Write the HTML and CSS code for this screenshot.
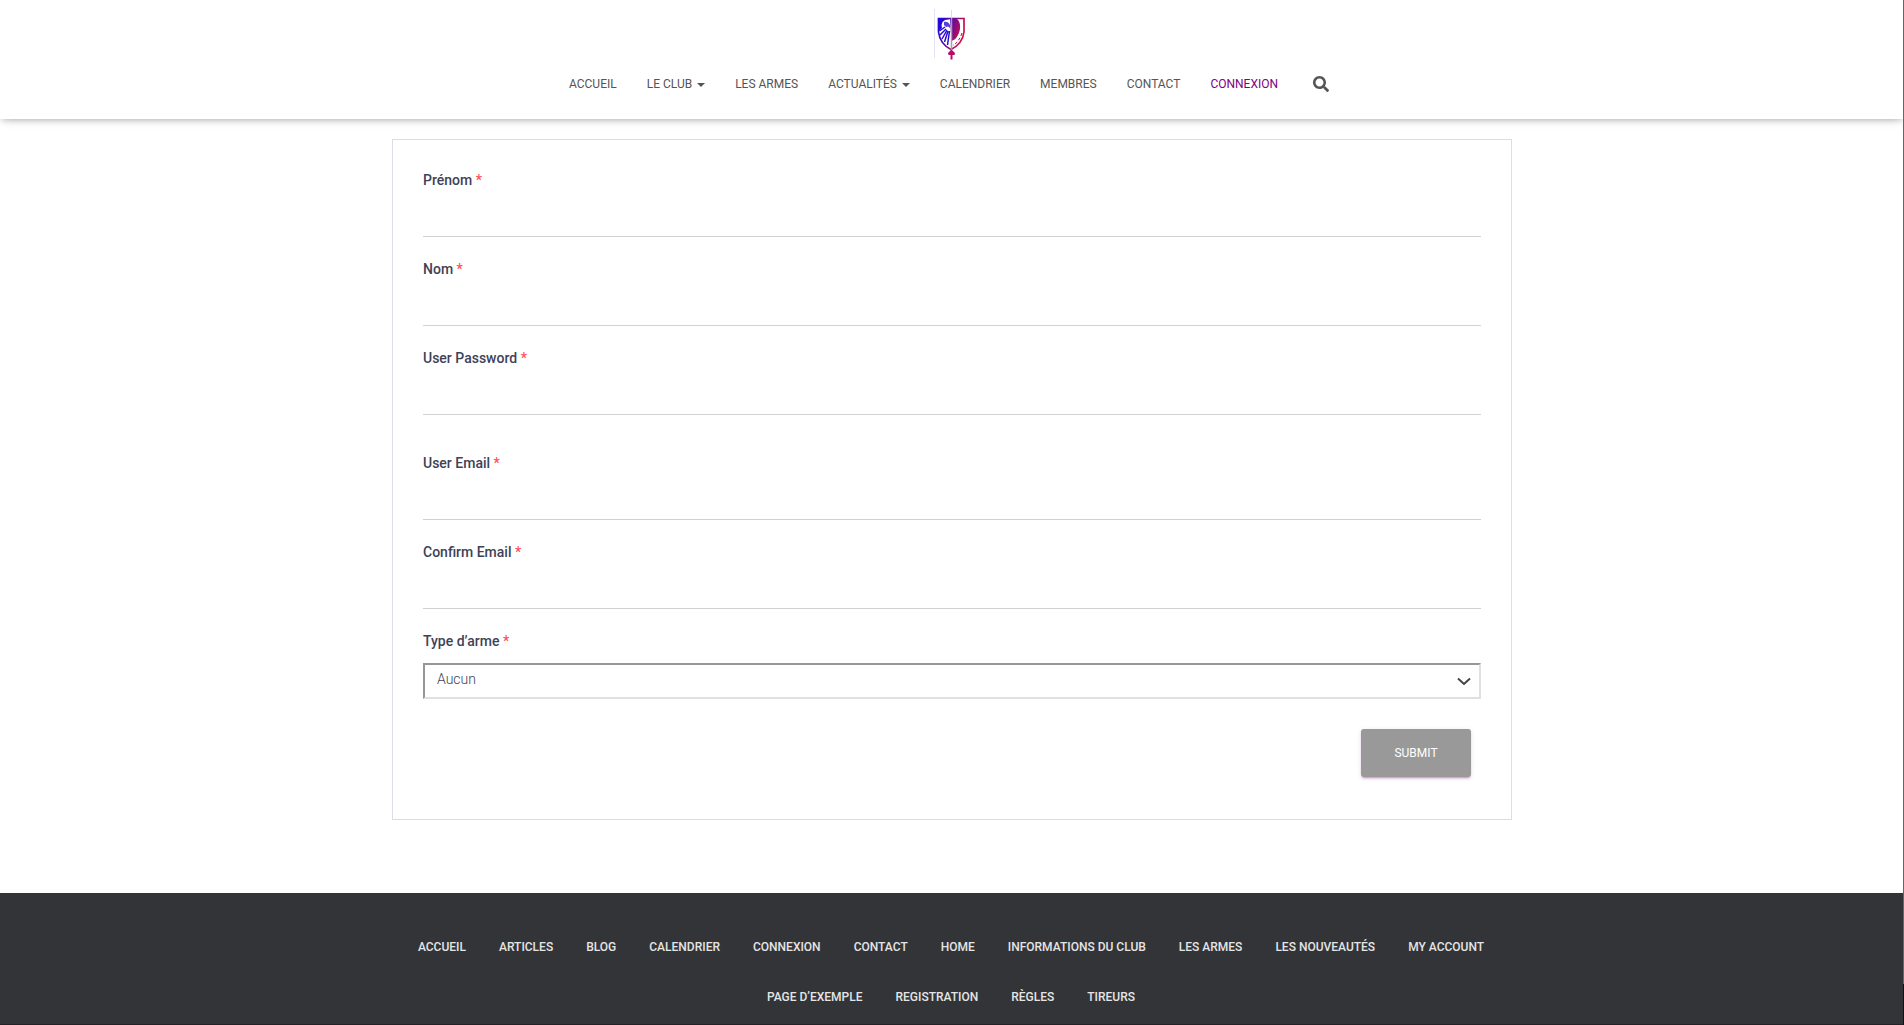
FILE: index.html
```html
<!DOCTYPE html>
<html lang="fr">
<head>
<meta charset="utf-8">
<title>Registration</title>
<link rel="stylesheet" href="styles.css">
</head>
<body>
<header class="header">
  <a class="logo" href="#" aria-label="Accueil">
    <svg width="36" height="56" viewBox="0 0 36 56">
      <defs>
        <linearGradient id="crest" gradientUnits="userSpaceOnUse" x1="5" y1="18" x2="30" y2="26">
          <stop offset="0" stop-color="#1c08dc"/>
          <stop offset="0.5" stop-color="#5f0aa0"/>
          <stop offset="1" stop-color="#d01045"/>
        </linearGradient>
      </defs>
      <path d="M1.500 5V54" stroke="#e6e2f5"/>
      <path d="M5.500 14.500H31V28C30 36 25 42 18 45.500C11 42 6.500 36 5.500 28Z" fill="#fff" stroke="url(#crest)" stroke-width="1.700"/>
      <path d="M17 15H24C28 18 28 26 25 31C23 35 21 36 18.500 37Z" fill="url(#crest)"/>
      <path d="M6 15H17L12 16L9.500 18L8.500 21L9 24L6 27Z" fill="#2208d8"/>
      <path d="M11 18C13 17 16 18 17 21L17 24L15 22.500L13 23L11 21Z" fill="#5a3fd8"/>
      <path d="M12 23L6.500 27M13 25L7 31M14 26L9 35M15 27L11.500 38M16.500 27L14.500 41" fill="none" stroke="#2a0cd0" stroke-width="1.500"/>
      <path d="M29 29C27 35 24 39 20 41.500" fill="none" stroke="#b01060" stroke-width="1" stroke-dasharray="3 2"/>
      <path d="M18.500 6V14" stroke="#dcd8ea"/>
      <path d="M18.500 14V46" stroke="#a59bb5" stroke-width="1.500"/>
      <path d="M18.500 45.500L22 49L21.500 51H19.500V55.500H17.500V51H15.500L15 49Z" fill="#b80c68"/>
    </svg>
  </a>
  <nav class="nav" aria-label="Menu principal">
    <a href="#">ACCUEIL</a>
    <a href="#">LE CLUB <span class="caret"></span></a>
    <a href="#">LES ARMES</a>
    <a href="#">ACTUALITÉS <span class="caret"></span></a>
    <a href="#">CALENDRIER</a>
    <a href="#">MEMBRES</a>
    <a href="#">CONTACT</a>
    <a class="current" href="#">CONNEXION</a>
    <button class="search" type="button" aria-label="Rechercher">
      <svg width="16" height="16" viewBox="0 0 512 512"><path fill="#555" d="M505 442.700 405.300 343c-4.500-4.500-10.600-7-17-7H372c27.600-35.300 44-79.700 44-128C416 93.100 322.900 0 208 0S0 93.100 0 208s93.100 208 208 208c48.300 0 92.700-16.400 128-44v16.300c0 6.400 2.500 12.500 7 17l99.700 99.700c9.400 9.400 24.600 9.400 33.900 0l28.300-28.300c9.400-9.400 9.400-24.600.1-34zM208 336c-70.700 0-128-57.200-128-128 0-70.700 57.200-128 128-128 70.700 0 128 57.200 128 128 0 70.700-57.200 128-128 128z"/></svg>
    </button>
  </nav>
</header>
<main class="main">
  <form class="form">
    <div class="field"><label for="first">Prénom <span class="req">*</span></label><input id="first" type="text"></div>
    <div class="field"><label for="last">Nom <span class="req">*</span></label><input id="last" type="text"></div>
    <div class="field field-password"><label for="pass">User Password <span class="req">*</span></label><input id="pass" type="password"></div>
    <div class="field"><label for="email">User Email <span class="req">*</span></label><input id="email" type="email"></div>
    <div class="field"><label for="email2">Confirm Email <span class="req">*</span></label><input id="email2" type="email"></div>
    <div class="field"><label for="arme">Type d’arme <span class="req">*</span></label>
      <div class="select">
        <select id="arme"><option>Aucun</option></select>
        <svg class="chevron" width="14" height="9" viewBox="0 0 14 9"><path d="M1 1.500L7 7L13 1.500" fill="none" stroke="#444" stroke-width="2"/></svg>
      </div>
    </div>
    <button class="submit" type="button">SUBMIT</button>
  </form>
</main>
<footer class="footer">
  <nav class="links" aria-label="Pied de page">
    <a href="#">ACCUEIL</a>
    <a href="#">ARTICLES</a>
    <a href="#">BLOG</a>
    <a href="#">CALENDRIER</a>
    <a href="#">CONNEXION</a>
    <a href="#">CONTACT</a>
    <a href="#">HOME</a>
    <a href="#">INFORMATIONS DU CLUB</a>
    <a href="#">LES ARMES</a>
    <a href="#">LES NOUVEAUTÉS</a>
    <a href="#">MY ACCOUNT</a>
    <a href="#">PAGE D’EXEMPLE</a>
    <a href="#">REGISTRATION</a>
    <a href="#">RÈGLES</a>
    <a href="#">TIREURS</a>
  </nav>
</footer>
<div class="edge"></div>
</body>
</html>
```
FILE: styles.css
```css
* { box-sizing: border-box; }
body {
  margin: 0;
  min-height: 100vh;
  display: flex;
  flex-direction: column;
  background: #fff;
  font-family: Roboto, "Liberation Sans", sans-serif;
  font-size: 14px;
}
a { color: inherit; text-decoration: none; }
.header {
  display: flex;
  flex-direction: column;
  align-items: center;
  padding: 4px 0 18px;
  box-shadow: 0 1px 10px -6px rgba(0,0,0,.42), 0 1px 10px 0 rgba(0,0,0,.12), 0 4px 5px -2px rgba(0,0,0,.1);
}
.logo { display: flex; padding-right: 2px; }
.nav {
  display: flex;
  align-items: center;
  gap: 30px;
  height: 34px;
  margin-top: 7px;
  padding-right: 6px;
  color: #555;
  font-size: 12px;
  line-height: 20px;
}
.nav .current { color: #800080; }
.caret {
  display: inline-block;
  margin-left: 2px;
  border: 4px solid transparent;
  border-top-color: #555;
  border-bottom: 0;
  vertical-align: middle;
}
.search {
  display: flex;
  margin-left: 5px;
  padding: 0;
  border: 0;
  background: none;
}
.main { padding: 20px 20px 73px; }
.form {
  display: flex;
  flex-direction: column;
  max-width: 1120px;
  margin: 0 auto;
  padding: 30px 30px 42px;
  border: 1px solid #dddde8;
}
.field { display: flex; flex-direction: column; margin-bottom: 22px; }
.field-password { margin-bottom: 38px; }
.field label { color: #3f4257; font-weight: 500; line-height: 21px; }
.req { color: #ff4f55; }
.field input {
  height: 46px;
  border: 0;
  border-bottom: 1px solid #d2d2d2;
  background: none;
  font: inherit;
  outline: 0;
}
.select { position: relative; margin-top: 11px; }
.select select {
  display: block;
  width: 100%;
  height: 36px;
  padding: 0 12px 4px;
  appearance: none;
  border: 2px solid #969696;
  border-right-color: #e0e0e0;
  border-bottom-color: #e0e0e0;
  border-radius: 0;
  background: #fff;
  color: #3f4257;
  font: 300 14px Roboto, "Liberation Sans", sans-serif;
}
.chevron { position: absolute; right: 10px; top: 14px; pointer-events: none; }
.submit {
  align-self: flex-end;
  width: 110px;
  height: 48px;
  margin: 8px 10px 0 0;
  border: 0;
  border-radius: 3px;
  background: #999;
  box-shadow: 0 2px 2px 0 rgba(128,0,128,.14), 0 3px 1px -2px rgba(128,0,128,.2), 0 1px 5px 0 rgba(128,0,128,.12);
  color: #fff;
  font: 400 12px Roboto, "Liberation Sans", sans-serif;
}
.footer {
  flex: 1;
  padding: 29px 20px 2px;
  background: #323437;
  border-bottom: 1px solid #232227;
}
.links {
  display: flex;
  flex-wrap: wrap;
  justify-content: center;
  column-gap: 33px;
  max-width: 1110px;
  margin: 0 auto;
  padding-right: 2px;
  color: #e5e5e5;
  font-size: 12px;
  font-weight: 500;
}
.links a { line-height: 20px; padding: 15px 0; }
.edge {
  position: absolute;
  top: 0;
  right: 0;
  width: 1px;
  height: 100%;
  background: linear-gradient(#666 96%, #111 96%);
}
```
